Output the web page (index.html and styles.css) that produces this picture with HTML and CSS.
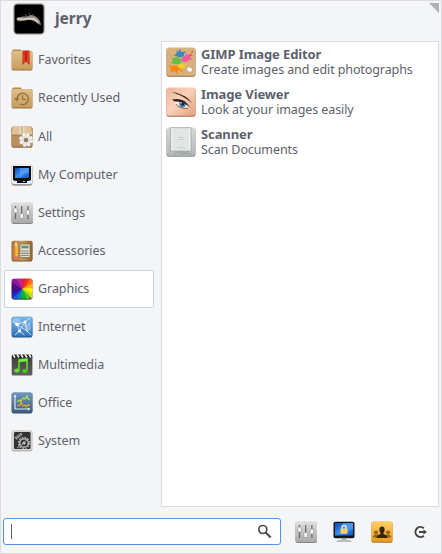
FILE: index.html
```html
<!DOCTYPE html>
<html lang="en">
<head>
<meta charset="utf-8">
<title>Menu</title>
<link rel="stylesheet" href="styles.css">
</head>
<body>
<svg class="defs" width="0" height="0">
  <defs>
    <linearGradient id="tan" x2="0" y2="1"><stop stop-color="#dfbd8a"/><stop offset="1" stop-color="#c89d5e"/></linearGradient>
    <linearGradient id="silver" x2="0" y2="1"><stop stop-color="#e0e0df"/><stop offset="1" stop-color="#a9a9a8"/></linearGradient>
    <linearGradient id="wood" x2="1" y2="0"><stop stop-color="#a9783f"/><stop offset=".5" stop-color="#c39559"/><stop offset="1" stop-color="#94642f"/></linearGradient>
    <linearGradient id="screen" x2="1" y2="1"><stop stop-color="#0c49b8"/><stop offset=".5" stop-color="#3d8df0"/><stop offset="1" stop-color="#0f54ca"/></linearGradient>
    <linearGradient id="sky" x2="0" y2="1"><stop stop-color="#7db7e8"/><stop offset="1" stop-color="#2f73b9"/></linearGradient>
    <linearGradient id="dark" x2="0" y2="1"><stop stop-color="#3c3c3c"/><stop offset="1" stop-color="#606060"/></linearGradient>
    <linearGradient id="slate" x2="0" y2="1"><stop stop-color="#6d98bd"/><stop offset="1" stop-color="#3e5c7c"/></linearGradient>
    <linearGradient id="skin" x2="1" y2="1"><stop stop-color="#eeb595"/><stop offset=".45" stop-color="#f8d3ba"/><stop offset="1" stop-color="#e39f7b"/></linearGradient>
    <linearGradient id="gold" x2="0" y2="1"><stop stop-color="#ffcf63"/><stop offset="1" stop-color="#e99a1d"/></linearGradient>
    <linearGradient id="plate" x2="0" y2="1"><stop stop-color="#d8dada"/><stop offset="1" stop-color="#b4b7b7"/></linearGradient>
    <g id="sliders">
      <rect x=".5" y="1" width="21.5" height="21" rx="2" fill="#868686"/>
      <rect x=".5" y=".3" width="21.5" height="20.7" rx="2" fill="url(#silver)"/>
      <path d="M4.5 4v13M10.7 4v13M16.9 4v13" stroke="#666" stroke-width="1.2"/>
      <g fill="#f6f6f6" stroke="#888" stroke-width=".6"><rect x="2.7" y="6" width="3.6" height="5" rx="1"/><rect x="8.9" y="11.5" width="3.6" height="5" rx="1"/><rect x="15.1" y="8" width="3.6" height="5" rx="1"/></g>
    </g>
  </defs>
</svg>
<div class="window">
  <header class="header">
    <svg class="avatar" width="32" height="32" viewBox="0 0 32 32">
      <rect x=".9" y=".9" width="30.200" height="30.200" rx="3.500" fill="#000" stroke="#aaa6a5" stroke-width="1.2"/>
      <path d="M4 15c3-2 6-1 9-1.500l5-1.500c4 0 7 3 9 6l1 4-3-1c-3-3-6-4-9-4-4 0-8 2-11 1-1-1-2-2-1-3z" fill="#8f8981"/>
      <path d="M4 16c3-1 5 1 8 0l6-.5c3 0 5 1 7 4" stroke="#e4d6c2" stroke-width="1.500" fill="none"/>
      <path d="M9 13l4 1M12 11l3 3M16 10l1 3M20 11l-1 2" stroke="#566069" stroke-width=".8"/>
    </svg>
    <h1 class="user">jerry</h1>
    <svg class="grip" width="10" height="10"><path d="M0 0h10v10z" fill="#adb1b8"/></svg>
  </header>
  <main class="body">
    <nav class="categories">
      <a class="category"><svg class="icon" viewBox="0 0 22 22">
        <path d="M1 2q0-1.600 1.500-1.600h7L11 2h10v5H1z" fill="#bb8b4d"/><rect x=".7" y="2" width="20.700" height="19.500" rx="1.600" fill="#94713f"/><rect x=".7" y="2" width="20.700" height="18.500" rx="1.600" fill="url(#tan)"/><path d="M11.500 1.500h7V16L15 12.500 11.500 16z" fill="#c7200d"/><path d="M13 2v12M17 2v12" stroke="#f2694b" stroke-width=".8"/></svg><span>Favorites</span></a>
      <a class="category"><svg class="icon" viewBox="0 0 22 22">
        <path d="M1 2q0-1.600 1.500-1.600h7L11 2h10v5H1z" fill="#bb8b4d"/><rect x=".7" y="2" width="20.700" height="19.500" rx="1.600" fill="#94713f"/><rect x=".7" y="2" width="20.700" height="18.500" rx="1.600" fill="url(#tan)"/><path d="M6 12a5.700 5.700 0 1 1 3 5" fill="none" stroke="#96703d" stroke-width="1.400"/><path d="M3 11h5.500l-2.700 3.500z" fill="#96703d"/><path d="M11.500 8v4.500H15" fill="none" stroke="#96703d" stroke-width="1.200"/></svg><span>Recently Used</span></a>
      <a class="category split"><svg class="icon" viewBox="0 0 22 22">
        <rect x=".5" y="1" width="21" height="20.700" rx="2" fill="#88694a"/><rect x=".5" y=".5" width="21" height="20" rx="2" fill="#b98f5e"/><path d="M2 .7h18l1.500 8H.5z" fill="#dec39b"/><path d="M8.500.5h5V9h-5z" fill="#eddcc0"/><path d="M.5 9h21M11 .5V20" stroke="#9c774b" stroke-width=".7"/>
        <circle cx="15" cy="14" r="4" fill="none" stroke="#e4e4e4" stroke-width="3.400"/><circle cx="15" cy="14" r="5.800" fill="none" stroke="#f5f5f5" stroke-width="2.400" stroke-dasharray="2.700 1.860"/><circle cx="15" cy="14" r="2" fill="#997655"/></svg><span>All</span></a>
      <a class="category"><svg class="icon" viewBox="0 0 22 22">
        <rect x=".5" y=".7" width="21" height="21" rx="3" fill="#999"/><rect x=".8" y=".5" width="20.400" height="19.500" rx="2.500" fill="#f1f1f1"/><path d="M2 2h18v14q-1 1-4 1v2H6v-2q-3 0-4-1z" fill="#0c0c0c"/><path d="M4 4h14v10H4z" fill="url(#screen)"/><path d="M9 4h9v5c-4 0-7 1-9 5z" fill="#67adff" opacity=".5"/><path d="M12 17.500h2" stroke="#98e33b"/></svg><span>My Computer</span></a>
      <a class="category"><svg class="icon" viewBox="0 0 22 22"><use href="#sliders"/></svg><span>Settings</span></a>
      <a class="category"><svg class="icon" viewBox="0 0 22 22">
        <rect x=".7" y="1" width="20.700" height="20.500" rx="1.700" fill="#654421"/><rect x=".7" y=".7" width="20.700" height="20" rx="1.700" fill="url(#wood)"/><path d="M3.500 5.500l1.500-4 1.700 4V17H3.500z" fill="#f7a01d"/><path d="M3.500 5.500L5 1.500l1.700 4z" fill="#f5dfb6"/><path d="M5.800 6v10" stroke="#ffd15b"/><path d="M3.500 16.500h3.200V19q-1.600 1-3.200 0z" fill="#ee6a82"/><rect x="9" y="4" width="10" height="13.500" rx=".8" fill="#deded2" stroke="#775a34" stroke-width=".6"/><path d="M10.500 5.700h7v2.600h-7z" fill="#62917b"/><path d="M10.500 11h7M10.500 13.300h7M10.500 15.500h7" stroke="#5d5750" stroke-width="1.200" stroke-dasharray="1.200 .75"/></svg><span>Accessories</span></a>
      <a class="category selected"><svg class="icon" viewBox="0 0 22 22">
        <clipPath id="tile"><rect x=".7" y=".7" width="20.700" height="20.700" rx="1.800"/></clipPath>
        <g clip-path="url(#tile)"><path d="M0 0h22v22H0z" fill="#8b199b"/><path d="M11 11Q11 4 8-1h9z" fill="#e91c35"/><path d="M11 11Q14 5 15-1h8z" fill="#fa3223"/><path d="M11 11Q17 7 19-1h5v8z" fill="#ff7218"/><path d="M11 11Q17 9 23 4v8z" fill="#ffb00c"/><path d="M11 11q6-1 12-1v8z" fill="#fff208"/><path d="M11 11q7 1 12 6v6z" fill="#b9e514"/><path d="M11 11q6 4 9 12h-6z" fill="#55cf1b"/><path d="M11 11q4 5 5 12H9z" fill="#0aba23"/><path d="M11 11q1 6-1 12H4z" fill="#0991aa"/><path d="M11 11Q9 18 5 23h-6z" fill="#1764d8"/><path d="M11 11Q6 17-1 22v-7z" fill="#182dc8"/><path d="M11 11Q5 15-1 16V9z" fill="#33108c"/><path d="M11 11Q5 12-1 10V3z" fill="#570b83"/><path d="M11 11Q8 3 4-1h6z" fill="#c127a0"/><path d="M0 21h22" stroke="#343434" opacity=".6"/></g></svg><span>Graphics</span></a>
      <a class="category"><svg class="icon" viewBox="0 0 22 22">
        <rect x=".7" y="1" width="20.700" height="20.500" rx="1.700" fill="#245486"/><rect x=".7" y=".6" width="20.700" height="20" rx="1.700" fill="url(#sky)"/><path d="M2 3l6-1 2 4-3 4-4-2zM13 9l6-3 1 7-4 4z" fill="#b9dbf4" opacity=".5"/><path d="M1.500 5L6 8.500 14 6l5-4M6 8.500l2.500 6.500 5 4M8.500 15L14 6l2 9M8.500 15L4 19M6 8.500l10 6.500 4 4" fill="none" stroke="#eaf6ff" stroke-width=".8"/><circle cx="6" cy="8.500" r="1.700" fill="#fff"/><circle cx="14" cy="6" r="1.400" fill="#fff"/><circle cx="8.500" cy="15" r="1.500" fill="#fff"/></svg><span>Internet</span></a>
      <a class="category"><svg class="icon" viewBox="0 0 22 22">
        <rect x=".7" y=".7" width="20.700" height="20.700" rx="1.500" fill="url(#dark)"/><path d="M1 .7h20v3H1z" fill="#171717"/><path d="M2 .5l2 3M6 .5l2 3M10 .5l2 3M14 .5l2 3M18 .5l2 3" stroke="#f1f1f1" stroke-width="1.700"/><path d="M8 16V6l8-1v11" fill="none" stroke="#51d321" stroke-width="1.800"/><path d="M8 7l8-1" stroke="#78ef3c" stroke-width="2.500"/><ellipse cx="6" cy="16.500" rx="2.700" ry="2.100" fill="#61e027"/><ellipse cx="14" cy="17" rx="2.700" ry="2.100" fill="#46c91b"/></svg><span>Multimedia</span></a>
      <a class="category"><svg class="icon" viewBox="0 0 22 22">
        <rect x=".7" y=".7" width="20.700" height="20.700" rx="1.700" fill="#324a64"/><rect x=".7" y=".4" width="20.700" height="20.300" rx="1.700" fill="url(#slate)"/><path d="M4 4v13h14" fill="none" stroke="#dce9f2" stroke-width="1.200"/><path d="M2.500 5L4 2.500 5.500 5zM17 15.500l2.500 1.500-2.500 1.500z" fill="#eef5fa"/><path d="M6 10l3-2 1 1 2-3 2 1 2-3 1 3 2 1" fill="none" stroke="#b5df48" stroke-width="1.300"/><path d="M6 14l3-1 1-3 2 4 2-1 1 2 2-2h2" fill="none" stroke="#eda62b" stroke-width="1.300"/></svg><span>Office</span></a>
      <a class="category"><svg class="icon" viewBox="0 0 22 22">
        <rect x=".5" y=".5" width="21" height="21" rx="2.800" fill="#b8b8b8"/><rect x="1" y=".5" width="20" height="19.500" rx="2.500" fill="#d3d3d3"/><rect x="3" y="2" width="16.500" height="17" rx="1.300" fill="#303030"/><path d="M4 8l7-5M5 9l6-5" stroke="#aaa" stroke-width="1.800" stroke-dasharray="1.500 .6"/><circle cx="13" cy="13" r="4.300" fill="none" stroke="#b4b4b4" stroke-width="1.600"/><circle cx="13" cy="13" r="5.600" fill="none" stroke="#b4b4b4" stroke-width="1.200" stroke-dasharray="1.600 1.330"/><circle cx="13" cy="13" r="1.600" fill="#ddd"/><path d="M13 13l-7 5M13 13l4-5" stroke="#aaa"/></svg><span>System</span></a>
    </nav>
    <section class="apps">
      <article class="app"><svg class="app-icon" viewBox="0 0 30 30">
        <rect x=".5" y="1" width="29" height="28.800" rx="2.500" fill="#8c6b46"/><rect x=".7" y=".5" width="28.600" height="28.300" rx="2.200" fill="#d9b17b"/><path d="M1 8h28M1 15h28M1 22h28" stroke="#cfa871"/>
        <g stroke-linecap="round" fill="none"><path d="M14 7l-3-3M14 7V3M14 7l5-2M13 8l-4 0" stroke="#3986bd" stroke-width="1.400"/><path d="M20 11l5-4M21 11l4 1M20 10l1-3" stroke="#ef5e9d" stroke-width="1.400"/><path d="M10 14l-4-3M10 14l-4 2M12 12l-2-2" stroke="#63be43" stroke-width="1.400"/><path d="M8 21l-4-2M8 22l-3 3M10 22l1 4M11 21l5 3" stroke="#ff8510" stroke-width="1.600"/><path d="M26 5l.5-.5M24 9l1-1" stroke="#e93b46" stroke-width="1.200"/></g>
        <ellipse cx="14" cy="7.500" rx="4" ry="2.700" fill="#3986bd"/><ellipse cx="20" cy="11.500" rx="4.600" ry="2.900" transform="rotate(-25 20 11.500)" fill="#ef5e9d"/><ellipse cx="11" cy="14" rx="4.500" ry="3.200" fill="#63be43"/><ellipse cx="15.500" cy="19" rx="3.500" ry="2.300" fill="#f2cf26"/><ellipse cx="8.500" cy="21.500" rx="4.200" ry="3" fill="#ff8510"/>
        <ellipse cx="23.500" cy="22.500" rx="3" ry="2.500" transform="rotate(25 23.500 22.500)" fill="#fff" stroke="#a98a60" stroke-width=".6"/></svg><div><h2>GIMP Image Editor</h2><p>Create images and edit photographs</p></div></article>
      <article class="app"><svg class="app-icon" viewBox="0 0 30 30">
        <rect x=".5" y="1" width="29" height="28.800" rx="2.500" fill="#9c6b52"/><rect x=".7" y=".5" width="28.600" height="28.300" rx="2.200" fill="url(#skin)"/><path d="M5 4.500c8 2 16 4 21 11.500C19 10 13 8 5 4.500z" fill="#49291f"/><path d="M8 14c5-2 11 0 16 6-5 2-12 1-14-3z" fill="#f1ede9"/><circle cx="16.500" cy="17" r="3.400" fill="#537ea9"/><circle cx="16.500" cy="17" r="1.500" fill="#142031"/><circle cx="15.300" cy="15.800" r=".8" fill="#fff"/><path d="M6 12.500c8-2 14 1 18.500 8.500-5-5-10-7-16-6.500z" fill="#352019"/><path d="M10 17c2 3 6 5 12 4.200" fill="none" stroke="#6d4434" stroke-width=".8"/></svg><div><h2>Image Viewer</h2><p>Look at your images easily</p></div></article>
      <article class="app"><svg class="app-icon" viewBox="0 0 30 30">
        <rect x=".5" y="1" width="29" height="28.800" rx="2.500" fill="#858888"/><rect x=".7" y=".5" width="28.600" height="28.300" rx="2.200" fill="url(#plate)"/><path d="M4.500.7h20.500v23.500H4.500z" fill="#e3e5e5" stroke="#a2a7a7" stroke-width=".8"/><path d="M6 1v22M23.600 1v22" stroke="#f6f6f6"/><path d="M12 10.500h6M12 12.500h6M11 20.500h8" stroke="#c6c8c8" stroke-width=".8"/><path d="M8 27l3-2h12M13 26.700h10" fill="none" stroke="#939898" stroke-width=".8"/><path d="M24 26.700h2" stroke="#79aa56"/></svg><div><h2>Scanner</h2><p>Scan Documents</p></div></article>
    </section>
  </main>
  <footer class="footer">
    <div class="search"><span class="caret"></span><svg class="lens" width="16" height="16" viewBox="0 0 16 16"><circle cx="5.800" cy="5.500" r="4" fill="none" stroke="#4b4b4b" stroke-width="1.700"/><path d="M8.700 8.500l5 5" stroke="#4b4b4b" stroke-width="2.200"/></svg></div>
    <div class="actions">
      <svg class="icon" viewBox="0 0 22 22"><use href="#sliders"/></svg>
      <svg class="icon" viewBox="0 0 22 22"><rect x=".5" y=".7" width="21" height="16.600" rx="1.800" fill="#141719"/><rect x="2" y="2" width="18" height="12.500" fill="url(#screen)"/><path d="M10 2h10v7c-4 0-7 2-8 5z" fill="#60a9f4" opacity=".5"/><path d="M9 8V6.500a2 2 0 0 1 4 0V8" fill="none" stroke="#f4eed8" stroke-width="1.400"/><rect x="7.500" y="7.500" width="7" height="5.300" rx=".6" fill="#ffd066"/><path d="M8.500 17h5v2.500h-5z" fill="#a5abae"/><path d="M5 19h12l2 2H3z" fill="#b9bdbf"/></svg>
      <svg class="icon" viewBox="0 0 22 22"><rect x=".5" y=".7" width="21" height="21" rx="1.800" fill="#a67428"/><rect x=".6" y=".4" width="20.800" height="20.300" rx="1.800" fill="url(#gold)"/><g fill="#98631b"><circle cx="5" cy="11.500" r="2"/><circle cx="17" cy="11.500" r="2"/><path d="M2 16.500q0-3 3-3t3 3zM14 16.500q0-3 3-3t3 3z"/></g><ellipse cx="11" cy="8.800" rx="2.600" ry="3.300" fill="#382415"/><path d="M5.500 17q0-3 4-4v-2h3v2q4 1 4 4z" fill="#382415"/></svg>
      <svg class="icon" viewBox="0 0 22 22"><path d="M14.800 7.300a5 5 0 1 0 0 7.400" fill="none" stroke="#444" stroke-width="2"/><path d="M10 11h6" stroke="#444" stroke-width="2"/><path d="M14.500 8.500l3.500 2.500-3.500 2.500z" fill="#444"/></svg>
    </div>
  </footer>
</div>
</body>
</html>
```

FILE: styles.css
```css
* { box-sizing: border-box; }
body { margin: 0; font-family: "Noto Sans", sans-serif; font-size: 12.5px; color: #5c616c; }
h1, h2, p { margin: 0; }
svg { display: block; flex: none; }
.defs { position: absolute; }
.window { width: 442px; height: 554px; border: 1px solid #dcdcde; background: #f4f5f7; display: flex; flex-direction: column; }
.header { height: 40px; display: flex; padding: 2px 2px 0 12px; }
.user { font-size: 15.5px; line-height: 28px; margin: 1px 0 0 10px; white-space: nowrap; }
.grip { margin-left: auto; }
.body { height: 466px; display: flex; gap: 7px; padding: 0 2px 0 3px; }
.categories { width: 150px; }
.category { height: 38px; padding-left: 6px; display: flex; align-items: center; gap: 5px; border: 1px solid transparent; border-radius: 2px; letter-spacing: -0.06px; white-space: nowrap; }
.category span { line-height: 20px; }
.split { margin-top: 1px; }
.selected { background: #fff; border-color: #cbd4e6; }
.icon { width: 22px; height: 22px; }
.apps { flex: 1; background: #fff; border: 1px solid #dcdcde; padding: 4px; }
.app { height: 40px; display: flex; gap: 5px; padding-top: 1px; white-space: nowrap; }
.app-icon { width: 30px; height: 30px; }
.app h2, .app p { line-height: 15px; }
.app h2 { font-size: 13px; letter-spacing: -0.1px; }
.app p { letter-spacing: -0.1px; }
.footer { display: flex; align-items: flex-start; padding: 11px 9px 0 2px; }
.search { width: 278px; height: 27px; background: #fff; border: 1px solid #5294e2; border-radius: 3px; display: flex; align-items: center; padding: 0 7px; }
.caret { width: 1px; height: 15px; background: #5c616c; }
.lens { margin-left: auto; }
.actions { display: flex; gap: 16px; margin: 3px 0 0 14px; }
```
